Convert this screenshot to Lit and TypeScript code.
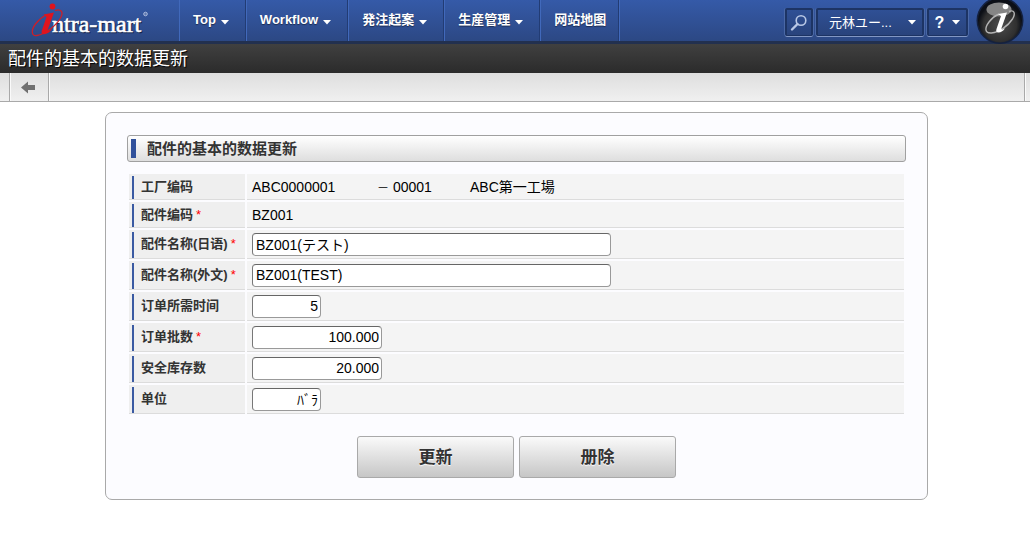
import { LitElement, html, css, svg, nothing } from "lit";
import { customElement } from "lit/decorators.js";
import { classMap } from "lit/directives/class-map.js";

interface NavItem {
  label: string;
  menu: boolean;
}

interface Field {
  id: string;
  label: string;
  required?: boolean;
  size: "long" | "medium" | "short";
  value: string;
}

const NAV: NavItem[] = [
  { label: "Top", menu: true },
  { label: "Workflow", menu: true },
  { label: "発注起案", menu: true },
  { label: "生産管理", menu: true },
  { label: "网站地图", menu: false },
];

const FIELDS: Field[] = [
  { id: "name-ja", label: "配件名称(日语)", required: true, size: "long", value: "BZ001(テスト)" },
  { id: "name-en", label: "配件名称(外文)", required: true, size: "long", value: "BZ001(TEST)" },
  { id: "lead", label: "订单所需时间", size: "short", value: "5" },
  { id: "lot", label: "订单批数", required: true, size: "medium", value: "100.000" },
  { id: "stock", label: "安全库存数", size: "medium", value: "20.000" },
  { id: "unit", label: "单位", size: "short", value: "ﾊﾞﾗ" },
];

const caret = html`<svg class="caret" width="8" height="5" viewBox="0 0 8 5" aria-hidden="true">
  ${svg`<path d="M0 0H8L4 4.6Z" fill="currentColor"/>`}
</svg>`;

@customElement("im-header")
export class ImHeader extends LitElement {
  static styles = css`
    :host {
      display: block;
    }
    .bar {
      display: flex;
      height: 41px;
      border-bottom: 3px solid #22304f;
      background: linear-gradient(#355aa8, #2c4884);
      color: #fff;
      font: bold 13px/16px "Liberation Sans", "Noto Sans CJK SC", sans-serif;
    }
    .brand {
      display: block;
      width: 179px;
      height: 41px;
      flex: none;
    }
    .wordmark {
      font: 24px "Liberation Serif", serif;
    }
    .nav {
      display: flex;
      margin: 0;
      padding: 0;
      list-style: none;
      border-left: 1px solid #4169bb;
    }
    .item {
      display: flex;
      border-right: 1px solid #4169bb;
      box-shadow: inset -1px 0 #223c74;
    }
    .link {
      display: flex;
      align-items: center;
      gap: 5px;
      min-height: 39px;
      padding: 0 17px 2px 13px;
      color: #fff;
      text-decoration: none;
      text-shadow: 0 1px 1px #1c2c52;
      white-space: nowrap;
    }
    .plain {
      padding-right: 13px;
    }
    .link .caret {
      margin-top: 5px;
    }
    .tools {
      display: flex;
      gap: 3px;
      margin-left: auto;
      padding: 8px 6px 0 0;
      align-items: flex-start;
    }
    .tool {
      display: flex;
      align-items: center;
      justify-content: center;
      box-sizing: border-box;
      height: 28px;
      margin: 0;
      padding: 0;
      border: 2px solid #1d3464;
      border-bottom-width: 1px;
      border-radius: 2px;
      background: linear-gradient(#2f5095, #29437c);
      box-shadow: 0 1px #8297c4, 1px 0 #4a68a6, -1px 0 #4a68a6;
      color: #fff;
      font: 13px/16px "Liberation Sans", "Noto Sans CJK JP", sans-serif;
    }
    .search {
      width: 28px;
    }
    .user {
      width: 108px;
      justify-content: space-between;
      padding: 0 6px 0 11px;
    }
    .help {
      width: 41px;
      gap: 8px;
      font-size: 16px;
      font-weight: bold;
    }
    .round {
      display: block;
      width: 48px;
      height: 44px;
      margin: -8px 0 0 5px;
    }
  `;

  render() {
    return html`
      <header class="bar">
        <svg class="brand" viewBox="0 0 179 41" role="img" aria-label="intra-mart">
          <text class="wordmark" x="53" y="33" fill="#16264c" stroke="#16264c" stroke-width="0.7">ntra-mart</text>
          <text class="wordmark" x="52" y="32" fill="#fff" stroke="#fff" stroke-width="0.6">ntra-mart</text>
          <circle cx="145.500" cy="14" r="1.800" fill="#5f79b0" stroke="#a9b9dc" stroke-width="1" />
          <path d="M55 10.500C61 8.500 64 12 60.500 18C56 26 45 34 37 35.500C31 36.500 31 30 35.500 24C38.500 20 42 17 46 15"
            fill="none" stroke="#c9202b" stroke-width="1.300" />
          <path d="M43.500 14.500L54 12.500L48 29C47 31.500 49 31.500 52 28.500C49 35 39.500 36.500 42 30L46.500 17Z"
            fill="#e0141e" />
          <circle cx="52.500" cy="6.500" r="2.900" fill="#e0141e" />
        </svg>
        <nav>
          <ul class="nav">
            ${NAV.map(
              (n) => html`<li class="item">
                <a class=${classMap({ link: true, plain: !n.menu })} href="#">${n.label}${n.menu ? caret : nothing}</a>
              </li>`
            )}
          </ul>
        </nav>
        <div class="tools">
          <button class="tool search" type="button" aria-label="Search">
            <svg width="18" height="18" viewBox="0 0 18 18" fill="none" stroke="#b9c8e6">
              <circle cx="11" cy="6.500" r="4.800" stroke-width="1.600" />
              <path d="M7.500 10L2 15.500" stroke-width="2.400" stroke-linecap="round" />
            </svg>
          </button>
          <button class="tool user" type="button" aria-haspopup="menu">元林ユー...${caret}</button>
          <button class="tool help" type="button" aria-haspopup="menu">?${caret}</button>
          <svg class="round" viewBox="0 0 48 44" aria-hidden="true">
            <defs>
              <radialGradient id="disc" cx="0.500" cy="0.600" r="0.500">
                <stop offset="0" stop-color="#4c4c4c" />
                <stop offset="0.750" stop-color="#303030" />
                <stop offset="1" stop-color="#0c0f16" />
              </radialGradient>
            </defs>
            <circle cx="24" cy="20.500" r="23.500" fill="#14213f" />
            <circle cx="24" cy="20.500" r="22" fill="url(#disc)" />
            <ellipse cx="23" cy="9.500" rx="12.500" ry="7" fill="#858585" />
            <path d="M33 11.500C38 9.500 40 13 36.500 19C32 26 23 32.500 15.500 33C8.500 33.500 8.500 28 13 22C16 18 19.500 15.500 23 14"
              fill="none" stroke="#b4b4b4" stroke-width="1.400" />
            <path d="M22 14L31 12.500L25.500 28C25 30 26.500 30 29 28C27 33 18.500 34.500 20.500 29L25 16Z" fill="#fff" />
            <circle cx="29.500" cy="6.500" r="2.800" fill="#fff" />
          </svg>
        </div>
      </header>
    `;
  }
}

@customElement("app-root")
export class AppRoot extends LitElement {
  static styles = css`
    :host {
      display: block;
      min-height: 100vh;
      background: #fff;
      color: #000;
      font: 14px/20px "Liberation Sans", "Noto Sans CJK JP", sans-serif;
    }
    .title {
      margin: 0;
      padding: 0 8px;
      height: 29px;
      background: linear-gradient(#404040, #2b2b2b);
      color: #fff;
      font: 18px/31px "Liberation Sans", "Noto Sans CJK SC", sans-serif;
      text-shadow: 1px 1px 1px #000;
    }
    .toolbar {
      display: flex;
      justify-content: space-between;
      height: 28px;
      padding: 0 5px 0 9px;
      border-bottom: 1px solid #a9a9a9;
      background: linear-gradient(#dedede, #f0f0f0);
    }
    .back {
      width: 40px;
      display: flex;
      align-items: center;
      justify-content: center;
      box-sizing: border-box;
      margin: 0;
      padding: 0 2px 0 0;
      border: solid #a9a9a9;
      border-width: 0 1px;
      background: none;
      box-shadow: inset 1px 0 #fafafa, 1px 0 #fafafa;
    }
    .end {
      border-right: 1px solid #a9a9a9;
      box-shadow: 1px 0 #fafafa;
    }
    .card {
      margin: 10px 102px 0 105px;
      padding: 22px 21px 21px;
      border: 1px solid #a9a9a9;
      border-radius: 7px;
      background: #fcfcff;
    }
    .section {
      display: flex;
      align-items: center;
      gap: 11px;
      margin: 0 0 12px;
      height: 25px;
      padding-left: 3px;
      border: 1px solid #a0a0a0;
      border-radius: 3px;
      background: linear-gradient(#fff, #dedede);
      color: #333;
      font: bold 15px/24px "Liberation Sans", "Noto Sans CJK SC", sans-serif;
    }
    .mark {
      width: 5px;
      height: 19px;
      background: #31519b;
    }
    .rows {
      display: grid;
      gap: 2px;
      padding: 0 2px;
    }
    .row {
      display: grid;
      grid-template-columns: 116px 1fr;
      column-gap: 2px;
      min-height: 26px;
    }
    .tall {
      min-height: 29px;
    }
    .name,
    .value {
      display: flex;
      align-items: center;
      border-bottom: 1px solid #dcdcdc;
    }
    .name {
      gap: 3px;
      padding-left: 3px;
      background: #efefef;
      color: #333;
      font: bold 13px/20px "Liberation Sans", "Noto Sans CJK SC", sans-serif;
    }
    .name::before {
      content: "";
      align-self: stretch;
      width: 2px;
      margin: 2px 4px 0 0;
      background: #3a5aa2;
    }
    .req {
      color: #f00;
      font-weight: normal;
    }
    .value {
      padding-left: 5px;
      background: #f4f4f4;
    }
    .factory {
      width: 125px;
    }
    .line {
      width: 93px;
    }
    .dash {
      font-size: 12px;
      line-height: 12px;
    }
    .input {
      box-sizing: border-box;
      height: 23px;
      margin: 0;
      padding: 0 2px 0 3px;
      border: 1px solid #999;
      border-top-color: #666;
      border-left-color: #777;
      border-radius: 4px;
      background: #fff;
      color: #000;
      font: 14px/20px "Liberation Sans", "Noto Sans CJK JP", sans-serif;
    }
    .long {
      width: 359px;
    }
    .medium {
      width: 130px;
      text-align: right;
    }
    .short {
      width: 69px;
      text-align: right;
    }
    .actions {
      display: flex;
      justify-content: center;
      gap: 5px;
      margin-top: 22px;
    }
    .button {
      box-sizing: border-box;
      width: 157px;
      height: 42px;
      margin: 0;
      padding: 2px 0 0;
      border: 1px solid #a9a9a9;
      border-radius: 3px;
      background: linear-gradient(#fafafa, #c6c6c6);
      color: #333;
      font: bold 17px/24px "Liberation Sans", "Noto Sans CJK SC", sans-serif;
      text-shadow: 0 1px 1px #fff;
    }
  `;

  private row(f: Field) {
    return html`<div class="row tall">
      <label class="name" for=${f.id}>${f.label}${f.required ? html`<span class="req">*</span>` : nothing}</label>
      <div class="value">
        <input id=${f.id} class="input ${f.size}" type="text" .value=${f.value} />
      </div>
    </div>`;
  }

  render() {
    return html`
      <im-header></im-header>
      <h1 class="title">配件的基本的数据更新</h1>
      <div class="toolbar">
        <button class="back" type="button" aria-label="Back">
          <svg width="14" height="13" viewBox="0 0 14 13" aria-hidden="true">
            <path d="M0 6.500L7 0.500V4H14V9H7V12.500Z" fill="#707070" />
          </svg>
        </button>
        <span class="end"></span>
      </div>
      <main>
        <form class="card">
          <h2 class="section"><span class="mark"></span>配件的基本的数据更新</h2>
          <div class="rows">
            <div class="row">
              <span class="name">工厂编码</span>
              <div class="value">
                <span class="factory">ABC0000001</span>
                <span class="line"><span class="dash">－</span> 00001</span>
                <span>ABC第一工場</span>
              </div>
            </div>
            <div class="row">
              <span class="name">配件编码<span class="req">*</span></span>
              <div class="value">BZ001</div>
            </div>
            ${FIELDS.map((f) => this.row(f))}
          </div>
          <div class="actions">
            <button class="button" type="button">更新</button>
            <button class="button" type="button">册除</button>
          </div>
        </form>
      </main>
    `;
  }
}
